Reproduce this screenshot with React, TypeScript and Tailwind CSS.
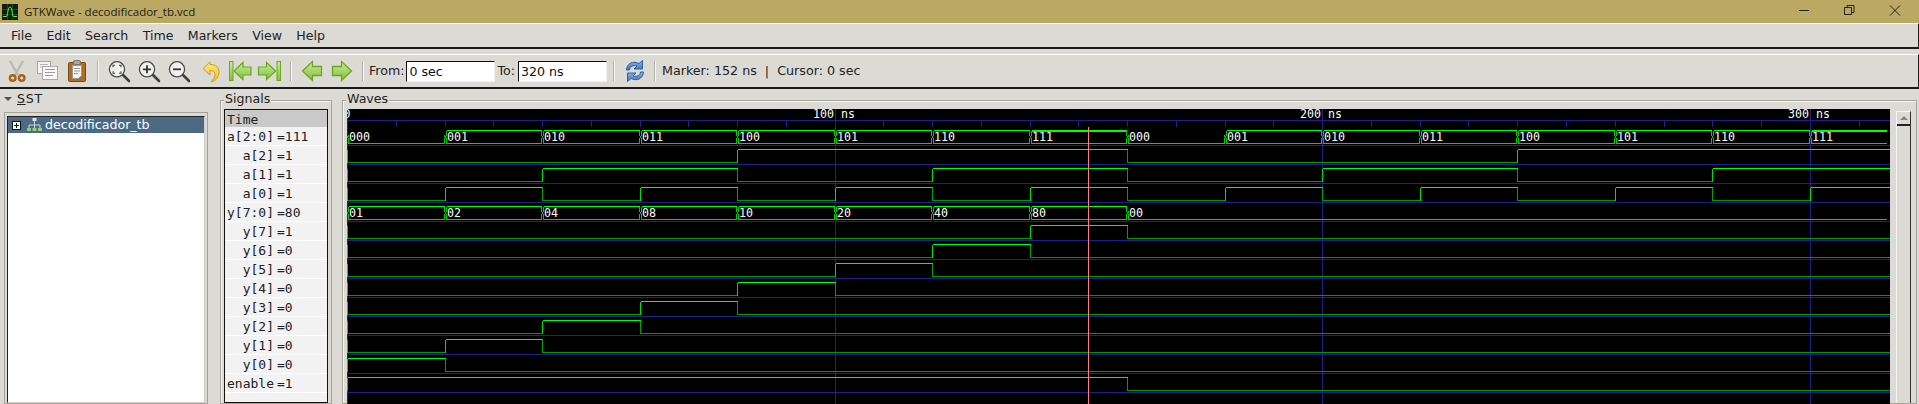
const ns = 4.876;
const W = 1543;
const H = 295;
const tx = (t: number) => Math.round(t * ns);

const busA = ["000", "001", "010", "011", "100", "101", "110", "111"];
const busY = ["01", "02", "04", "08", "10", "20", "40", "80"];

type Row = { name: string; value: string };

const rows: Row[] = [
  { name: "a[2:0]", value: "=111" },
  { name: "a[2]", value: "=1" },
  { name: "a[1]", value: "=1" },
  { name: "a[0]", value: "=1" },
  { name: "y[7:0]", value: "=80" },
  { name: "y[7]", value: "=1" },
  { name: "y[6]", value: "=0" },
  { name: "y[5]", value: "=0" },
  { name: "y[4]", value: "=0" },
  { name: "y[3]", value: "=0" },
  { name: "y[2]", value: "=0" },
  { name: "y[1]", value: "=0" },
  { name: "y[0]", value: "=0" },
  { name: "enable", value: "=1" },
];

const rowY = (i: number) => 21.5 + i * 19;

// bit signal as a list of [start time, level]
function bitPath(i: number, segs: [number, number][]) {
  const hi = rowY(i);
  const lo = hi + 13;
  const els = [];
  for (let s = 0; s < segs.length; s++) {
    const [t, v] = segs[s];
    const end = s + 1 < segs.length ? segs[s + 1][0] : 340;
    const x1 = tx(t) + 0.5;
    const x2 = Math.min(tx(end) + 0.5, W);
    els.push(
      <line key={`h${i}-${s}`} x1={x1} x2={x2} y1={v ? hi : lo} y2={v ? hi : lo} stroke={v ? "#00ff00" : "#009a00"} />
    );
    els.push(<line key={`v${i}-${s}`} x1={x1} x2={x1} y1={hi} y2={lo} stroke={v || s === 0 ? "#00e000" : "#00a000"} />);
  }
  return els;
}

function pulse(on: number, off: number): [number, number][] {
  if (on === 0) return [[0, 1], [off, 0]];
  return [[0, 0], [on, 1], [off, 0]];
}

function square(period: number): [number, number][] {
  const out: [number, number][] = [];
  let v = 0;
  for (let t = 0; t < 320; t += period) {
    out.push([t, v]);
    v = v ? 0 : 1;
  }
  return out;
}

function busSeg(i: number, a: number, b: number, value: string, kind: "zero" | "ones" | "mid", last: boolean) {
  const hi = rowY(i);
  const lo = hi + 13;
  const mid = hi + 6.5;
  const x1 = tx(a);
  const x2 = Math.min(tx(b), W - 3);
  const top = kind === "zero" ? mid : hi;
  return (
    <g key={`b${i}-${a}`}>
      {kind !== "zero" && (
        <line x1={x1 + 2} x2={x2} y1={kind === "ones" ? hi + 0.5 : hi} y2={kind === "ones" ? hi + 0.5 : hi} stroke="#00ff00" strokeWidth={kind === "ones" ? 2 : 1} />
      )}
      <line x1={x1 + 2} x2={x2} y1={lo} y2={lo} stroke="#00dd00" />
      <polyline points={`${x1 + 1.5},${top} ${x1 + 1.5},${mid - 2} ${x1 + 0.5},${mid} ${x1 + 1.5},${mid + 2} ${x1 + 1.5},${lo}`} fill="none" stroke="#00cc00" />
      {!last && <polyline points={`${x2 - 0.5},${top} ${x2 - 0.5},${mid - 2} ${x2 + 0.5},${mid} ${x2 - 0.5},${mid + 2} ${x2 - 0.5},${lo}`} fill="none" stroke="#00cc00" />}
      <text x={x1 + 2} y={hi + 10} fill="#ffffff" fontSize={11.6} fontFamily="'DejaVu Sans Mono', monospace">{value}</text>
    </g>
  );
}

function WaveView() {
  const ticks = [];
  for (let t = 0; t <= 320; t += 10) ticks.push(t);
  const busASegs = [];
  for (let k = 0; k < 16; k++) {
    const v = busA[k % 8];
    busASegs.push(busSeg(0, k * 20, (k + 1) * 20, v, v === "000" ? "zero" : v === "111" ? "ones" : "mid", k === 15));
  }
  const busYSegs = [];
  for (let k = 0; k < 8; k++) busYSegs.push(busSeg(4, k * 20, (k + 1) * 20, busY[k], "mid", false));
  busYSegs.push(busSeg(4, 160, 340, "00", "zero", true));

  return (
    <svg width={W} height={H} className="block bg-black shrink-0" shapeRendering="crispEdges">
      <line x1={0} x2={W} y1={11.5} y2={11.5} stroke="#20208c" />
      {ticks.map((t) => (
        <line key={t} x1={tx(t) + 0.5} x2={tx(t) + 0.5} y1={12} y2={18} stroke="#20208c" />
      ))}
      {rows.map((_, i) => (
        <line key={i} x1={0} x2={W} y1={rowY(i) + 15} y2={rowY(i) + 15} stroke="#20208c" />
      ))}
      {[0, 100, 200, 300].map((t) => (
        <line key={t} x1={tx(t) + 0.5} x2={tx(t) + 0.5} y1={0} y2={H} stroke="#20208c" />
      ))}
      <g fontSize={11.6} fontFamily="'DejaVu Sans Mono', monospace" fill="#ffffff">
        <text x={-3.500} y={9}>0</text>
        {[100, 200, 300].map((t) => (
          <g key={t}>
            <text x={tx(t) - 1} y={9} textAnchor="end">{t}</text>
            <text x={tx(t) + 6} y={9}>ns</text>
          </g>
        ))}
      </g>
      {busASegs}
      {bitPath(1, square(80))}
      {bitPath(2, square(40))}
      {bitPath(3, square(20))}
      {busYSegs}
      {[7, 6, 5, 4, 3, 2, 1, 0].map((bit, n) => (
        <g key={bit}>{bitPath(5 + n, pulse(bit * 20, (bit + 1) * 20))}</g>
      ))}
      {bitPath(13, [[0, 1], [160, 0]])}
      <line x1={tx(152) + 0.5} x2={tx(152) + 0.5} y1={18} y2={H} stroke="#ff8080" />
    </svg>
  );
}

function Sep({ w }: { w: string }) {
  return (
    <div className={`${w} shrink-0 flex justify-center`}>
      <div className="w-[2px] h-[20px] bg-[#f7f6f3] border-l border-[#b5b3ac]" />
    </div>
  );
}

function ToolIcon({ children, w }: { children: React.ReactNode; w?: string }) {
  return (
    <div className={`${w ?? "w-[30px]"} shrink-0 flex justify-center`}>
      <svg width="26" height="26" viewBox="0 0 26 26" className="shrink-0">
        {children}
      </svg>
    </div>
  );
}

function Magnifier({ mark }: { mark: "fit" | "plus" | "minus" }) {
  return (
    <ToolIcon>
      <line x1="17" y1="17" x2="23" y2="23" stroke="#3f3f3f" strokeWidth="2.6" strokeLinecap="round" />
      <circle cx="11" cy="11.3" r="7.6" fill="#f2f2ef" stroke="#4a4a4a" strokeWidth="1.3" />
      {mark === "plus" && <path d="M7 11.3h8M11 7.3v8" stroke="#333" strokeWidth="1.8" />}
      {mark === "minus" && <path d="M7 11.3h8" stroke="#333" strokeWidth="1.8" />}
      {mark === "fit" && <path d="M7 9.3v-2h2M13 7.3h2v2M15 13.3v2h-2M9 15.3h-2v-2" stroke="#444" strokeWidth="1.1" fill="none" />}
    </ToolIcon>
  );
}

const arrowFill = "url(#arrowGrad)";
const arrowStroke = "#6aa81f";

function Toolbar() {
  return (
    <div className="flex items-center h-[35px] pl-[2px] bg-[#dcdad5] border-t border-white border-b-2 border-b-[#1a1a1a] border-r border-r-[#222]">
      <svg width="0" height="0" className="absolute">
        <defs>
          <linearGradient id="arrowGrad" x1="0" y1="0" x2="0" y2="1">
            <stop offset="0" stopColor="#cdeaa6" />
            <stop offset="0.5" stopColor="#a6d568" />
            <stop offset="1" stopColor="#86bd42" />
          </linearGradient>
          <linearGradient id="blueGrad" x1="0" y1="0" x2="0" y2="1">
            <stop offset="0" stopColor="#8fb4de" />
            <stop offset="1" stopColor="#3f74b8" />
          </linearGradient>
          <linearGradient id="undoGrad" x1="0" y1="0" x2="0" y2="1">
            <stop offset="0" stopColor="#fbe88a" />
            <stop offset="1" stopColor="#eebf27" />
          </linearGradient>
        </defs>
      </svg>
      <ToolIcon>
        <path d="M6 3 14 17M19 3 11 17" stroke="#b9b9b4" strokeWidth="2.2" fill="none" />
        <circle cx="8.7" cy="20" r="2.8" fill="none" stroke="#a9641a" strokeWidth="2.4" />
        <circle cx="17.7" cy="20" r="2.8" fill="none" stroke="#a9641a" strokeWidth="2.4" />
      </ToolIcon>
      <ToolIcon>
        <rect x="3.5" y="3.5" width="13" height="12" fill="#f4f4f2" stroke="#a8a8a4" />
        <path d="M6 6.5h8M6 9h8" stroke="#b5b5b1" />
        <rect x="8.5" y="8.5" width="15" height="13" fill="#f8f8f6" stroke="#a8a8a4" />
        <path d="M11 11.5h10M11 14.5h10M11 17.5h8" stroke="#9c9c98" />
      </ToolIcon>
      <ToolIcon>
        <rect x="4.5" y="4.5" width="17" height="19" rx="1" fill="#b06d22" stroke="#7a4a12" />
        <rect x="9.5" y="2.5" width="7" height="4" rx="1.5" fill="#a8a8a4" stroke="#777" />
        <path d="M8.5 7.5h9v10l-3 3h-6z" fill="#f4f4f2" stroke="#999" />
        <path d="M10 10.5h6M10 13h6M10 15.5h4" stroke="#999" />
      </ToolIcon>
      <Sep w="w-[12px]" />
      <Magnifier mark="fit" />
      <Magnifier mark="plus" />
      <Magnifier mark="minus" />
      <ToolIcon>
        <path d="M14 4 7 10.5l7 6.5v-4.5c3.500 0 5 1.500 5 4 0 3-2 5-4 7.500 5-1 8-5 8-10 0-5-3-7.500-9-7.500Z" fill="url(#undoGrad)" stroke="#c9a11d" strokeWidth="1" />
      </ToolIcon>
      <ToolIcon>
        <path d="M8 13 17 4.500V9H25V17H17V21.500Z" fill={arrowFill} stroke={arrowStroke} strokeWidth="1.200" />
        <rect x="3.500" y="3.500" width="3.500" height="19" fill={arrowFill} stroke={arrowStroke} />
      </ToolIcon>
      <ToolIcon>
        <path d="M19.500 13 10.500 4.500V9H2.500V17H10.500V21.500Z" fill={arrowFill} stroke={arrowStroke} strokeWidth="1.200" />
        <rect x="21" y="3.500" width="3.500" height="19" fill={arrowFill} stroke={arrowStroke} />
      </ToolIcon>
      <Sep w="w-[13px]" />
      <ToolIcon>
        <path d="M3.500 13 13.500 3.500V8.500H22.500V17.500H13.500V22.500Z" fill={arrowFill} stroke={arrowStroke} strokeWidth="1.300" />
      </ToolIcon>
      <ToolIcon>
        <path d="M22.500 13 12.500 3.500V8.500H3.500V17.500H12.500V22.500Z" fill={arrowFill} stroke={arrowStroke} strokeWidth="1.300" />
      </ToolIcon>
      <Sep w="w-[12px]" />
      <span className="text-[#222] mr-[2px]">From:</span>
      <div className="w-[89px] h-[21px] shrink-0 bg-white border border-[#111] border-r-[#f2f1ee] border-b-[#f2f1ee] pl-[2px] leading-[20px]">0 sec</div>
      <span className="text-[#222] ml-[2px] mr-[3px]">To:</span>
      <div className="w-[89px] h-[21px] shrink-0 bg-white border border-[#111] border-r-[#f2f1ee] border-b-[#f2f1ee] pl-[2px] leading-[20px]">320 ns</div>
      <Sep w="w-[15px]" />
      <div className="w-[27px] shrink-0 flex justify-center">
        <svg width="22" height="24" viewBox="0 0 22 24" className="shrink-0">
          <path d="M2.500 11C3 5.500 7 2.500 12 3.500l3 1 3.500-3v8.500h-8.500l3-3c-4-1-7 0-7.500 4Z" fill="url(#blueGrad)" stroke="#2f5f9e" />
          <path d="M19.500 13c-.5 5.500-4.500 8.500-9.500 7.500l-3-1-3.500 3v-8.500h8.500l-3 3c4 1 7 0 7.500-4Z" fill="url(#blueGrad)" stroke="#2f5f9e" />
        </svg>
      </div>
      <Sep w="w-[13px]" />
      <span className="text-[#222] text-[12.7px] whitespace-pre">Marker: 152 ns  |  Cursor: 0 sec</span>
    </div>
  );
}

function Frame({ label, className, children }: { label: string; className: string; children: React.ReactNode }) {
  return (
    <div className={`relative border border-[#a5a39c] shadow-[inset_1px_1px_0_#f7f6f3] ${className}`}>
      <span className="absolute left-[3px] -top-[10px] bg-[#dcdad5] px-[1px] leading-[16px] text-[#222]">{label}</span>
      {children}
    </div>
  );
}

export default function App() {
  return (
    <div className="w-[1919px] h-[404px] overflow-hidden bg-[#dcdad5] flex flex-col text-[12.6px] text-[#111]" style={{ fontFamily: "'DejaVu Sans', sans-serif" }}>
      {/* title bar */}
      <div className="h-[23px] shrink-0 bg-[#bba963] flex items-center pl-[2px]">
        <svg width="16" height="16" viewBox="0 0 16 16" className="shrink-0">
          <rect width="16" height="16" fill="#0c200c" />
          <path d="M0 5.500h16M0 10.500h16M5.500 0v16M10.500 0v16" stroke="#1d6f2d" strokeWidth="0.6" />
          <path d="M1 12.500h3.500C6 12.500 5.500 3 8 3s2 9.500 3.500 9.500H15" stroke="#6fe06f" fill="none" />
        </svg>
        <span className="ml-[6px] text-[11.5px] text-[#1c1c10]" style={{ fontFamily: "'Open Sans', sans-serif" }}>GTKWave - decodificador_tb.vcd</span>
        <svg width="120" height="23" viewBox="0 0 120 23" className="ml-auto shrink-0">
          <path d="M0 10.500h10" stroke="#222" />
          <path d="M45.500 7.500h7v7h-7zM48 7V5.500h7v7h-2.500" stroke="#222" fill="none" />
          <path d="M91 5.500 101 15.500M101 5.500 91 15.500" stroke="#222" fill="none" />
        </svg>
      </div>
      {/* menu bar */}
      <div className="h-[26px] shrink-0 flex items-center gap-[14.3px] pl-[11px] pt-[1px] border-t border-white border-b-2 border-b-[#1a1a1a] border-r border-r-[#222]">
        {["File", "Edit", "Search", "Time", "Markers", "View", "Help"].map((m) => (
          <span key={m} className="text-[#222]">{m}</span>
        ))}
      </div>
      <div className="h-[5px] shrink-0" />
      <Toolbar />
      {/* panes */}
      <div className="flex-1 flex min-h-0 pt-[1px]">
        <div className="w-[204px] shrink-0 ml-[4px] flex flex-col">
          <div className="h-[22px] flex items-center gap-[5px] pb-[4px] shrink-0">
            <span className="w-0 h-0 border-l-[4px] border-r-[4px] border-t-[4px] border-l-transparent border-r-transparent border-t-[#555]" />
            <span className="text-[#222] tracking-[0.7px]"><span className="underline">S</span>ST</span>
          </div>
          <div className="flex-1 min-h-0 border border-[#a5a39c] px-[2px] pt-[3px]">
            <div className="h-full bg-white border border-[#222] border-r-[#d0cec9] border-b-[#d0cec9]">
              <div className="h-[16px] bg-[#4c6a85] flex items-center pl-[4px] text-white">
                <span className="w-[9px] h-[9px] border border-[#111] bg-white relative shrink-0">
                  <span className="absolute left-[1px] top-[3px] w-[5px] h-px bg-[#111]" />
                  <span className="absolute left-[3px] top-[1px] w-px h-[5px] bg-[#111]" />
                </span>
                <svg width="17" height="14" viewBox="0 0 17 14" className="ml-[5px] mr-[2px] shrink-0">
                  <path d="M8.500 3v4M3 7h11M3 7v3M8.500 7v3M14 7v3" stroke="#c9d6dd" fill="none" />
                  <rect x="6.500" y="0" width="4" height="3" fill="#d9e4ea" />
                  <rect x="1" y="10" width="4" height="3" fill="#8fce7a" />
                  <rect x="6.500" y="10" width="4" height="3" fill="#8fce7a" />
                  <rect x="12" y="10" width="4" height="3" fill="#8fce7a" />
                </svg>
                <span>decodificador_tb</span>
              </div>
            </div>
          </div>
        </div>
        <div className="w-[12px] shrink-0" />
        <Frame label="Signals" className="w-[112px] shrink-0 mt-[10px] mr-[10px] px-[3px] pt-[8px]">
          <div className="h-full border border-[#111] bg-[#f2f2f2] text-[#222] text-[13px] overflow-hidden" style={{ fontFamily: "'DejaVu Sans Mono', monospace" }}>
            <div className="h-[17px] bg-[#c9c9c9] pl-[2px] leading-[20px]">Time</div>
            {rows.map((r) => (
              <div key={r.name} className="h-[19px] pt-[1px] border-b border-white flex leading-[18px]">
                <span className="w-[49px] text-right shrink-0">{r.name}</span>
                <span className="ml-[3px]">{r.value}</span>
              </div>
            ))}
          </div>
        </Frame>
        <Frame label="Waves" className="flex-1 min-w-0 mt-[10px] mr-[2px] pl-[4px] pt-[8px] flex">
          <WaveView />
          <div className="ml-[6px] mt-[2px] w-[15px] shrink-0 border-l border-t border-[#f7f6f3] border-r border-r-[#333] bg-[#dcdad5]">
            <div className="h-[14px] border-b-2 border-b-[#222] flex items-center justify-center">
              <span className="w-0 h-0 border-l-[4px] border-r-[4px] border-b-[4px] border-l-transparent border-r-transparent border-b-[#8a8883]" />
            </div>
          </div>
        </Frame>
      </div>
    </div>
  );
}
